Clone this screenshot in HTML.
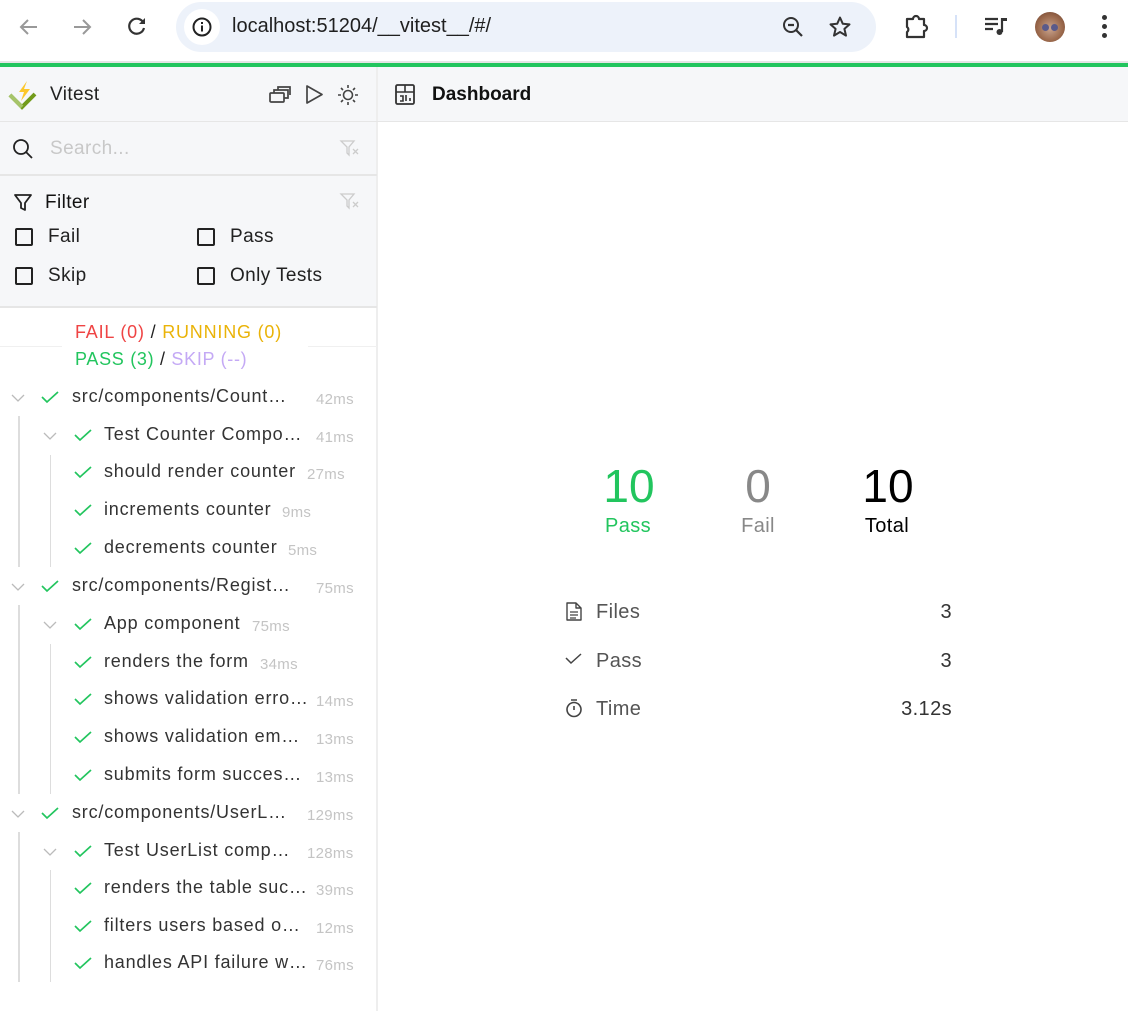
<!DOCTYPE html>
<html><head><meta charset="utf-8">
<style>
*{box-sizing:border-box;margin:0;padding:0}
body{width:1128px;height:1011px;overflow:hidden;background:#fff;font-family:"Liberation Sans",sans-serif;position:relative;color:#222}
.a{position:absolute}
.t{position:absolute;white-space:nowrap;line-height:1;letter-spacing:0.4px}
svg{position:absolute;overflow:visible}
.ms{position:absolute;font-size:15px;color:#c4c4c4;white-space:nowrap;line-height:1;letter-spacing:0.3px}
.nm{position:absolute;font-size:18px;color:#333;white-space:nowrap;line-height:1;letter-spacing:0.8px}
</style></head><body>
<div class="a" style="left:0;top:0;width:1128px;height:63px;background:#fff"></div>
<svg style="left:18px;top:16px" width="22" height="22" viewBox="0 0 22 22"><path d="M19 11H4M10 4l-7 7 7 7" fill="none" stroke="#999" stroke-width="2"/></svg>
<svg style="left:71px;top:16px" width="22" height="22" viewBox="0 0 22 22"><path d="M3 11h15M12 4l7 7-7 7" fill="none" stroke="#999" stroke-width="2"/></svg>
<svg style="left:126px;top:15px" width="22" height="22" viewBox="0 0 22 22"><path d="M17.5 8A7.5 7.5 0 1 0 18 13" fill="none" stroke="#333" stroke-width="2.2"/><path d="M19 3v6h-6z" fill="#333"/></svg>
<div class="a" style="left:176px;top:2px;width:700px;height:50px;border-radius:25px;background:#edf2fa"></div>
<div class="a" style="left:184px;top:9px;width:36px;height:36px;border-radius:18px;background:#fff"></div>
<svg style="left:192px;top:17px" width="20" height="20" viewBox="0 0 20 20"><circle cx="10" cy="10" r="8.5" fill="none" stroke="#222" stroke-width="2"/><rect x="9" y="8.5" width="2" height="6" fill="#222"/><rect x="9" y="5" width="2" height="2" fill="#222"/></svg>
<div class="t" style="left:232px;top:16px;font-size:20px;color:#1f1f1f;letter-spacing:0">localhost:51204/__vitest__/#/</div>
<svg style="left:781px;top:15px" width="24" height="24" viewBox="0 0 24 24"><circle cx="10" cy="10" r="7" fill="none" stroke="#333" stroke-width="2"/><path d="M7 10h6M15 15l6 6" stroke="#333" stroke-width="2.2"/></svg>
<svg style="left:828px;top:15px" width="24" height="24" viewBox="0 0 24 24"><path d="M12 2.5l2.8 6.3 6.7.6-5.1 4.5 1.6 6.7L12 17l-6 3.6 1.6-6.7-5.1-4.5 6.7-.6z" fill="none" stroke="#333" stroke-width="2" stroke-linejoin="round"/></svg>
<svg style="left:904px;top:14px" width="26" height="26" viewBox="0 0 26 26"><path d="M3 5h6a3 3 0 0 1 6 0h5v6a3 3 0 0 1 0 6v6H3v-5a3 3 0 0 0 0-5z" fill="none" stroke="#333" stroke-width="2.2" stroke-linejoin="round"/></svg>
<div class="a" style="left:955px;top:15px;width:2px;height:23px;background:#d6e2f8"></div>
<svg style="left:985px;top:16px" width="24" height="22" viewBox="0 0 24 22"><path d="M0 3h13M0 8h13M0 13h8" stroke="#333" stroke-width="2.2"/><path d="M17 2v14" stroke="#333" stroke-width="2.2"/><path d="M17 2h5v3h-5z" fill="#333"/><circle cx="14.5" cy="16" r="3" fill="#333"/></svg>
<div class="a" style="left:1035px;top:12px;width:30px;height:30px;border-radius:15px;background:radial-gradient(circle at 50% 55%,#c9a48f 0,#9c6a4d 55%,#6b3e2b 100%)"></div>
<div class="a" style="left:1042px;top:24px;width:7px;height:7px;border-radius:4px;background:#5a5a8a"></div>
<div class="a" style="left:1051px;top:24px;width:7px;height:7px;border-radius:4px;background:#5a5a8a"></div>
<div class="a" style="left:1102px;top:15px;width:5px;height:5px;border-radius:3px;background:#333"></div>
<div class="a" style="left:1102px;top:24px;width:5px;height:5px;border-radius:3px;background:#333"></div>
<div class="a" style="left:1102px;top:33px;width:5px;height:5px;border-radius:3px;background:#333"></div>
<div class="a" style="left:0;top:61px;width:1128px;height:2px;background:#e4e4e4"></div>
<div class="a" style="left:0;top:63px;width:1128px;height:4px;background:#22c55e"></div>

<div class="a" style="left:0;top:67px;width:377px;height:240px;background:#f6f7f9"></div>
<div class="a" style="left:376px;top:67px;width:2px;height:944px;background:#eeeeee"></div>
<div class="a" style="left:378px;top:67px;width:750px;height:55px;background:#f6f7f9"></div>
<div class="a" style="left:0;top:121px;width:1128px;height:1px;background:#e6e6e6"></div>
<div class="a" style="left:0;top:174px;width:377px;height:2px;background:#e6e6e6"></div>
<div class="a" style="left:0;top:306px;width:377px;height:2px;background:#e6e6e6"></div>

<svg style="left:8px;top:80px" width="30" height="30" viewBox="0 0 30 30"><path d="M2 15l12 12 13-13" fill="none" stroke="#729b1b" stroke-width="4"/><path d="M2 15l12 12" fill="none" stroke="#a6c46a" stroke-width="4"/><path d="M19 1l-8 11h5l-3 9 9-12h-6z" fill="#fcc72b"/></svg>
<div class="t" style="left:50px;top:85px;font-size:19px;color:#222">Vitest</div>
<svg style="left:268px;top:85px" width="24" height="20" viewBox="0 0 24 20"><rect x="2" y="8" width="14" height="9" rx="1" fill="none" stroke="#444" stroke-width="1.7"/><path d="M6 8V5h14v8h-4M10 5V2h12v8" fill="none" stroke="#444" stroke-width="1.7"/></svg>
<svg style="left:305px;top:84px" width="20" height="22" viewBox="0 0 20 22"><path d="M2 2v17l15-8.5z" fill="none" stroke="#444" stroke-width="1.7" stroke-linejoin="round"/></svg>
<svg style="left:337px;top:84px" width="22" height="22" viewBox="0 0 22 22"><circle cx="11" cy="11" r="4.5" fill="none" stroke="#444" stroke-width="1.6"/><path d="M11 1v3M11 18v3M1 11h3M18 11h3M4 4l2 2M16 16l2 2M4 18l2-2M16 6l2-2" stroke="#444" stroke-width="1.6"/></svg>

<svg style="left:12px;top:138px" width="22" height="22" viewBox="0 0 22 22"><circle cx="9" cy="9" r="7" fill="none" stroke="#222" stroke-width="1.8"/><path d="M14 14l6 6" stroke="#222" stroke-width="1.8"/></svg>
<div class="t" style="left:50px;top:139px;font-size:19px;color:#c8c8c8">Search...</div>
<svg style="left:340px;top:140px" width="20" height="18" viewBox="0 0 20 18"><path d="M1 1h13l-5 6v8l-2-2V7z" fill="none" stroke="#ccc" stroke-width="1.3"/><path d="M13 9l5 5M18 9l-5 5" stroke="#ccc" stroke-width="1.3"/></svg>

<svg style="left:13px;top:193px" width="20" height="20" viewBox="0 0 20 20"><path d="M2 2h16l-6 8v7l-4-2v-5z" fill="none" stroke="#222" stroke-width="1.8" stroke-linejoin="round"/></svg>
<div class="t" style="left:45px;top:193px;font-size:19px;color:#111">Filter</div>
<svg style="left:340px;top:193px" width="20" height="18" viewBox="0 0 20 18"><path d="M1 1h13l-5 6v8l-2-2V7z" fill="none" stroke="#ccc" stroke-width="1.3"/><path d="M13 9l5 5M18 9l-5 5" stroke="#ccc" stroke-width="1.3"/></svg>
<div class="a" style="left:15px;top:228px;width:18px;height:18px;border:2px solid #222;border-radius:2px"></div>
<div class="t" style="left:48px;top:227px;font-size:19px">Fail</div>
<div class="a" style="left:197px;top:228px;width:18px;height:18px;border:2px solid #222;border-radius:2px"></div>
<div class="t" style="left:230px;top:227px;font-size:19px">Pass</div>
<div class="a" style="left:15px;top:267px;width:18px;height:18px;border:2px solid #222;border-radius:2px"></div>
<div class="t" style="left:48px;top:266px;font-size:19px">Skip</div>
<div class="a" style="left:197px;top:267px;width:18px;height:18px;border:2px solid #222;border-radius:2px"></div>
<div class="t" style="left:230px;top:266px;font-size:19px">Only Tests</div>

<div class="a" style="left:0;top:346px;width:377px;height:1px;background:#f0f0f0"></div>
<div class="a" style="left:62px;top:316px;width:246px;height:58px;background:#fff"></div>
<div class="t" style="left:75px;top:323px;font-size:18px;letter-spacing:0.8px"><span style="color:#ef4444">FAIL (0)</span> <span style="color:#222">/</span> <span style="color:#eab308">RUNNING (0)</span></div>
<div class="t" style="left:75px;top:350px;font-size:18px;letter-spacing:0.7px"><span style="color:#22c55e">PASS (3)</span> <span style="color:#222">/</span> <span style="color:#c4a9f5">SKIP (--)</span></div>

<div class="a" style="left:18px;top:416px;width:2px;height:151px;background:#ddd"></div>
<div class="a" style="left:50px;top:455px;width:1px;height:112px;background:#ddd"></div>
<div class="a" style="left:18px;top:605px;width:2px;height:189px;background:#ddd"></div>
<div class="a" style="left:50px;top:644px;width:1px;height:150px;background:#ddd"></div>
<div class="a" style="left:18px;top:832px;width:2px;height:150px;background:#ddd"></div>
<div class="a" style="left:50px;top:870px;width:1px;height:112px;background:#ddd"></div>

<div id="tree"></div>
<script>
var rows=[
[397,0,"src/components/Count…","42ms",1],
[435,1,"Test Counter Compo…","41ms",1],
[472,2,"should render counter","27ms",0],
[510,2,"increments counter","9ms",0],
[548,2,"decrements counter","5ms",0],
[586,0,"src/components/Regist…","75ms",1],
[624,1,"App component","75ms",1],
[662,2,"renders the form","34ms",0],
[699,2,"shows validation erro…","14ms",0],
[737,2,"shows validation em…","13ms",0],
[775,2,"submits form succes…","13ms",0],
[813,0,"src/components/UserL…","129ms",1],
[851,1,"Test UserList comp…","128ms",1],
[888,2,"renders the table suc…","39ms",0],
[926,2,"filters users based o…","12ms",0],
[963,2,"handles API failure w…","76ms",0]];
var h="";
rows.forEach(function(r){
 var y=r[0],lv=r[1];
 var base=lv==0?0:32;
 if(r[4]) h+='<svg style="left:'+(base+11)+'px;top:'+(y-3)+'px" width="14" height="8" viewBox="0 0 14 8"><path d="M1 1l6 6 6-6" fill="none" stroke="#bbb" stroke-width="1.3"/></svg>';
 var cx=lv==0?41:74;
 h+='<svg style="left:'+cx+'px;top:'+(y-6)+'px" width="18" height="12" viewBox="0 0 18 12"><path d="M1 6l5 5L17 1" fill="none" stroke="#22c55e" stroke-width="1.7"/></svg>';
 var tx=lv==0?72:104;
 h+='<div class="nm" style="left:'+tx+'px;top:'+(y-10)+'px" id="n'+y+'">'+r[2]+'</div>';
 h+='<div class="ms" data-t="'+(r[2].indexOf('…')>=0?1:0)+'" data-y="'+y+'" style="top:'+(y-5)+'px;left:0">'+r[3]+'</div>';
});
document.getElementById('tree').innerHTML=h;
document.querySelectorAll('.ms').forEach(function(m){
 var y=m.getAttribute('data-y');var n=document.getElementById('n'+y);
 var end=n.offsetLeft+n.offsetWidth+11;
 var w=m.offsetWidth;
 var l=end;
 if(m.getAttribute('data-t')=='1'||l+w>354)l=354-w;
 m.style.left=l+'px';
});
</script>

<svg style="left:395px;top:84px" width="20" height="21" viewBox="0 0 20 21"><rect x="1" y="1" width="18" height="19" rx="1.5" fill="none" stroke="#333" stroke-width="1.8"/><path d="M1 8h18M10 1v7M5 12h3v5H5M11 11v6M15 14v3" fill="none" stroke="#333" stroke-width="1.6"/></svg>
<div class="t" style="left:432px;top:85px;font-size:19px;font-weight:bold;color:#111;letter-spacing:0">Dashboard</div>

<div class="t" style="left:603px;top:463px;font-size:46px;color:#22c55e;width:52px;text-align:center;letter-spacing:0">10</div>
<div class="t" style="left:588px;top:516px;font-size:20px;color:#22c55e;width:80px;text-align:center">Pass</div>
<div class="t" style="left:728px;top:463px;font-size:46px;color:#888;width:60px;text-align:center;letter-spacing:0">0</div>
<div class="t" style="left:718px;top:516px;font-size:20px;color:#888;width:80px;text-align:center">Fail</div>
<div class="t" style="left:860px;top:463px;font-size:46px;color:#000;width:56px;text-align:center;letter-spacing:0">10</div>
<div class="t" style="left:847px;top:516px;font-size:20px;color:#000;width:80px;text-align:center">Total</div>

<svg style="left:566px;top:602px" width="16" height="19" viewBox="0 0 16 19"><path d="M1 1h9l5 5v12H1z M10 1v5h5" fill="none" stroke="#444" stroke-width="1.4" stroke-linejoin="round"/><path d="M4 10h8M4 13h8M4 16h6" stroke="#444" stroke-width="1.3"/></svg>
<div class="t" style="left:596px;top:602px;font-size:20px;color:#555">Files</div>
<div class="t" style="left:900px;top:602px;font-size:20px;color:#333;width:52px;text-align:right">3</div>
<svg style="left:565px;top:653px" width="18" height="12" viewBox="0 0 18 12"><path d="M1 5l5 5 10-9" fill="none" stroke="#444" stroke-width="1.5"/></svg>
<div class="t" style="left:596px;top:651px;font-size:20px;color:#555">Pass</div>
<div class="t" style="left:900px;top:651px;font-size:20px;color:#333;width:52px;text-align:right">3</div>
<svg style="left:565px;top:698px" width="18" height="20" viewBox="0 0 18 20"><circle cx="9" cy="11.5" r="7" fill="none" stroke="#444" stroke-width="1.6"/><path d="M6 2h6M9 8v4" stroke="#444" stroke-width="1.6"/></svg>
<div class="t" style="left:596px;top:699px;font-size:20px;color:#555">Time</div>
<div class="t" style="left:880px;top:699px;font-size:20px;color:#333;width:72px;text-align:right">3.12s</div>
</body></html>
